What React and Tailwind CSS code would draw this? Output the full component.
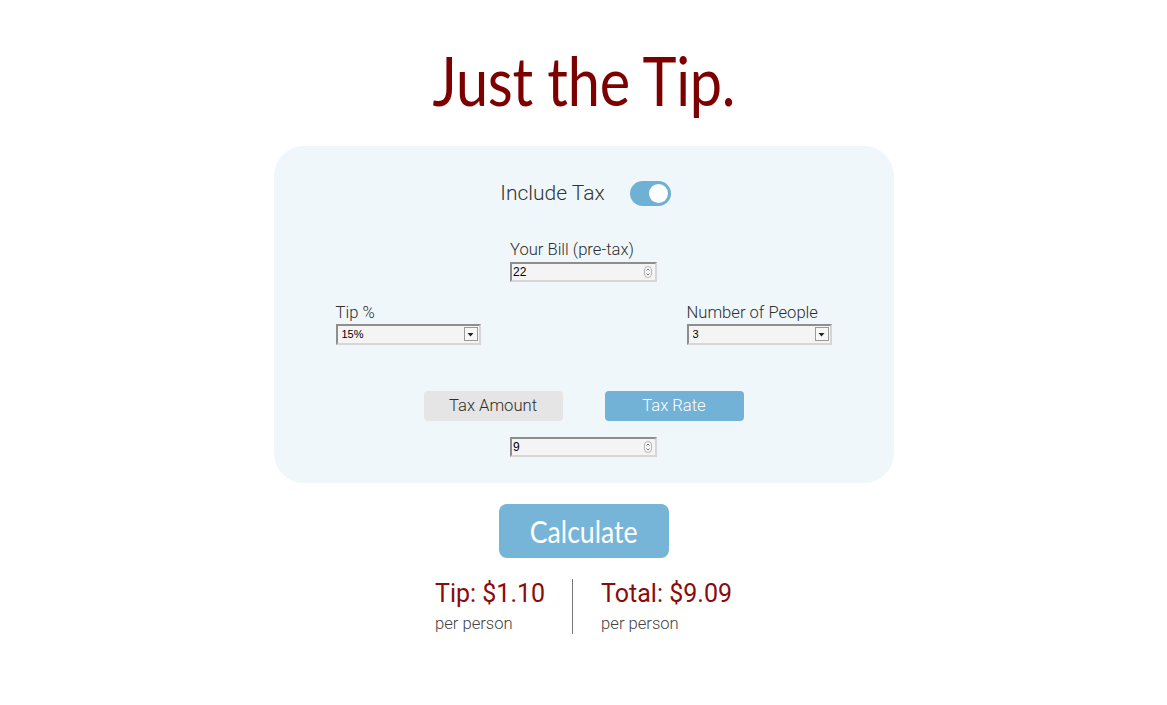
import React from "react";

function Spinner() {
  return (
    <svg width="8" height="12" viewBox="0 0 8 12" className="mr-[3px]">
      <rect x="0.5" y="0.5" width="7" height="11" rx="3.5" fill="#f7f7f7" stroke="#b5b5b5" />
      <path d="M2.5 4.5 L4 3 L5.5 4.5" fill="none" stroke="#666" strokeWidth="0.9" />
      <path d="M2.5 7.5 L4 9 L5.5 7.5" fill="none" stroke="#666" strokeWidth="0.9" />
    </svg>
  );
}

function NumberBox({ value }) {
  return (
    <div className="w-[147px] h-[20px] flex items-center justify-between bg-[#f4f4f4] border-2 border-t-[#8e8e8e] border-l-[#8e8e8e] border-r-[#d6d6d6] border-b-[#d6d6d6] text-[12px] text-black font-['Liberation_Sans',sans-serif] pl-[1px]">
      <span>{value}</span>
      <Spinner />
    </div>
  );
}

function SelectBox({ value }) {
  return (
    <div className="w-[145px] h-[21px] flex items-center justify-between bg-[#f4f4f4] border-2 border-t-[#8e8e8e] border-l-[#8e8e8e] border-r-[#d6d6d6] border-b-[#d6d6d6] text-[11px] text-black font-['Liberation_Sans',sans-serif] pl-[4px] pr-[1px]">
      <span>{value}</span>
      <div className="w-[14px] h-[14px] bg-[#f7f7f7] border border-[#9a9a9a] flex items-center justify-center">
        <svg width="7" height="5" viewBox="0 0 7 5">
          <path d="M0.5 1 L6.5 1 L3.5 4.5 Z" fill="#222" />
        </svg>
      </div>
    </div>
  );
}

export default function App() {
  return (
    <div className="w-full min-h-[705px] bg-white flex flex-col items-center font-['Roboto',sans-serif]">
      <h1 className="mt-[40px] text-[#7d0000] text-[67px] leading-[80px] font-normal font-['Lato',sans-serif] scale-x-[0.86] tracking-[-0.3px]">
        Just the Tip.
      </h1>
      <div className="mt-[26px] w-[620px] h-[337px] bg-[#f0f7fa] rounded-[30px] flex flex-col items-center px-[62px]">
        <div className="mt-[32px] flex items-center gap-[25px] ml-[4px]">
          <span className="text-[21px] font-light text-[#333]">Include Tax</span>
          <div className="w-[41px] h-[25px] rounded-full bg-[#6fb0d5] flex items-center justify-end pr-[3px]">
            <div className="w-[19px] h-[19px] rounded-full bg-white" />
          </div>
        </div>
        <div className="mt-[30px] flex flex-col items-start">
          <span className="text-[16.6px] font-light text-[#2e2e2e] leading-[20px]">Your Bill (pre-tax)</span>
          <div className="mt-[2px]">
            <NumberBox value="22" />
          </div>
        </div>
        <div className="mt-[21px] w-full flex justify-between">
          <div className="flex flex-col items-start">
            <span className="text-[16.6px] font-light text-[#2e2e2e] leading-[20px]">Tip %</span>
            <div className="mt-[1px]">
              <SelectBox value="15%" />
            </div>
          </div>
          <div className="flex flex-col items-start">
            <span className="text-[16.6px] font-light text-[#2e2e2e] leading-[20px]">Number of People</span>
            <div className="mt-[1px]">
              <SelectBox value="3" />
            </div>
          </div>
        </div>
        <div className="mt-[46px] flex gap-[42px]">
          <button className="w-[139px] h-[30px] rounded-[4px] bg-[#e5e5e5] text-[16.6px] font-light text-[#2e2e2e] pt-[1px]">
            Tax Amount
          </button>
          <button className="w-[139px] h-[30px] rounded-[4px] bg-[#72b2d6] text-[16.6px] font-light text-white pt-[1px]">
            Tax Rate
          </button>
        </div>
        <div className="mt-[16px]">
          <NumberBox value="9" />
        </div>
      </div>
      <button className="mt-[21px] w-[170px] h-[54px] rounded-[8px] bg-[#76b5d8] text-white text-[31px] font-normal font-['Lato',sans-serif]">
        <span className="inline-block scale-x-[0.86]">Calculate</span>
      </button>
      <div className="mt-[21px] flex items-stretch">
        <div className="flex flex-col items-start pr-[27px]">
          <span className="text-[25px] leading-[30px] text-[#8b0a0a]">Tip: $1.10</span>
          <span className="mt-[5px] text-[16.6px] leading-[20px] font-light text-[#444]">per person</span>
        </div>
        <div className="w-[1px] h-[55px] bg-[#777]" />
        <div className="flex flex-col items-start pl-[28px]">
          <span className="text-[25px] leading-[30px] text-[#8b0a0a]">Total: $9.09</span>
          <span className="mt-[5px] text-[16.6px] leading-[20px] font-light text-[#444]">per person</span>
        </div>
      </div>
    </div>
  );
}
